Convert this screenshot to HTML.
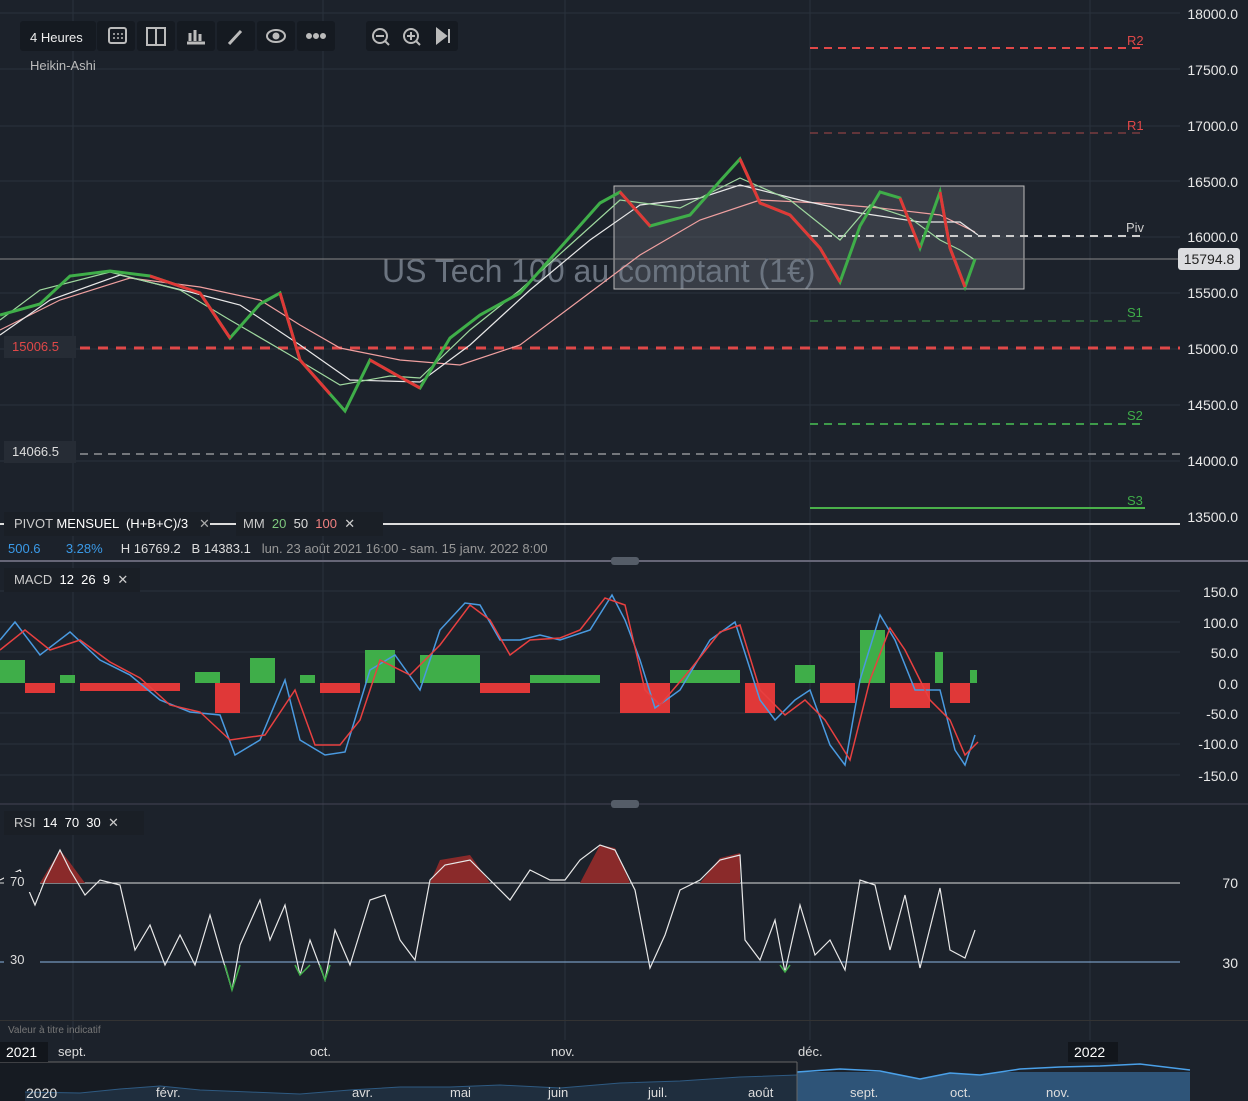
<!DOCTYPE html>
<html><head><meta charset="utf-8"><style>
body{margin:0;width:1248px;height:1101px;background:#1c222b;overflow:hidden;font-family:"Liberation Sans",sans-serif;position:relative;color:#ddd}
.ax{position:absolute;font-size:14px;color:#e8e8e8;right:10px}
.tb{position:absolute;background:#151a21;border-radius:3px;height:30px;top:21px}
.lab{position:absolute;font-size:13px}
</style></head><body>
<svg width="1248" height="1101" style="position:absolute;left:0;top:0">
<g stroke="#2a323d" stroke-width="1">
<line x1="0" y1="13" x2="1180" y2="13"/><line x1="0" y1="69" x2="1180" y2="69"/><line x1="0" y1="126" x2="1180" y2="126"/><line x1="0" y1="181" x2="1180" y2="181"/><line x1="0" y1="237" x2="1180" y2="237"/><line x1="0" y1="293" x2="1180" y2="293"/><line x1="0" y1="349" x2="1180" y2="349"/><line x1="0" y1="405" x2="1180" y2="405"/><line x1="0" y1="461" x2="1180" y2="461"/>
<line x1="0" y1="591" x2="1180" y2="591"/><line x1="0" y1="622" x2="1180" y2="622"/><line x1="0" y1="652" x2="1180" y2="652"/><line x1="0" y1="713" x2="1180" y2="713"/><line x1="0" y1="744" x2="1180" y2="744"/><line x1="0" y1="775" x2="1180" y2="775"/>
<line x1="73" y1="0" x2="73" y2="1040"/><line x1="323" y1="0" x2="323" y2="1040"/><line x1="565" y1="0" x2="565" y2="1040"/><line x1="810" y1="0" x2="810" y2="1040"/><line x1="1090" y1="0" x2="1090" y2="1040"/>
</g>
<rect x="614" y="186" width="410" height="103" fill="#5a6068" fill-opacity="0.45" stroke="#bbb" stroke-width="1"/>
<line x1="0" y1="259" x2="1180" y2="259" stroke="#888" stroke-width="1"/>
<line x1="810" y1="48" x2="1145" y2="48" stroke="#e04848" stroke-width="2" stroke-dasharray="8 6"/>
<line x1="810" y1="133" x2="1145" y2="133" stroke="#a84848" stroke-width="1" stroke-dasharray="8 6"/>
<line x1="810" y1="236" x2="1145" y2="236" stroke="#ccc" stroke-width="2" stroke-dasharray="8 6"/>
<line x1="810" y1="321" x2="1145" y2="321" stroke="#3e9a4a" stroke-width="1" stroke-dasharray="8 6"/>
<line x1="80" y1="348" x2="1180" y2="348" stroke="#e04848" stroke-width="3" stroke-dasharray="10 8"/>
<line x1="810" y1="424" x2="1145" y2="424" stroke="#3e9a4a" stroke-width="2" stroke-dasharray="8 6"/>
<line x1="80" y1="454" x2="1180" y2="454" stroke="#ccc" stroke-width="1" stroke-dasharray="8 6"/>
<line x1="810" y1="508" x2="1145" y2="508" stroke="#4ab04a" stroke-width="2"/>
<text x="382" y="282" font-size="32" fill="#6b7480" font-family="Liberation Sans">US Tech 100 au comptant (1€)</text>
<polyline fill="none" stroke="#f0a0a0" stroke-width="1.2" points="0,330 60,300 130,278 200,287 260,300 300,325 340,348 400,360 460,365 520,345 580,300 640,255 700,220 760,200 820,203 880,208 940,215 975,232"/>
<polyline fill="none" stroke="#e8e8e8" stroke-width="1.2" points="0,335 50,300 120,275 190,292 240,305 300,345 350,380 420,382 470,345 530,290 590,240 640,205 700,198 740,185 800,200 860,213 920,222 960,222 978,235"/>
<polyline fill="none" stroke="#9fd89f" stroke-width="1.2" points="0,320 40,290 110,272 180,290 230,320 290,355 340,385 390,376 420,378 470,330 520,290 570,245 620,200 680,208 740,178 790,200 840,240 870,205 910,218 940,240 960,250 975,260"/>
<polyline fill="none" stroke="#3fae49" stroke-width="3" points="0,315 40,304 70,276 110,271 150,276 200,293 230,338 260,304 280,293 300,360 330,394 345,411 370,360 400,377 420,388 450,338 480,315 520,293 560,248 600,203 620,192 650,226 690,215 720,181 740,159 760,203 790,215 820,248 840,282 860,226 880,192 900,198 920,248 940,192 950,248 965,287 975,259"/>
<polyline fill="none" stroke="#e03838" stroke-width="3" points="150,276 200,293 230,338"/>
<polyline fill="none" stroke="#e03838" stroke-width="3" points="280,293 300,360 330,394"/>
<polyline fill="none" stroke="#e03838" stroke-width="3" points="370,360 400,377 420,388"/>
<polyline fill="none" stroke="#e03838" stroke-width="3" points="620,192 650,226"/>
<polyline fill="none" stroke="#e03838" stroke-width="3" points="740,159 760,203 790,215 820,248 840,282"/>
<polyline fill="none" stroke="#e03838" stroke-width="3" points="900,198 920,248"/>
<polyline fill="none" stroke="#e03838" stroke-width="3" points="940,192 950,248 965,287"/>
<line x1="0" y1="524" x2="1180" y2="524" stroke="#ddd" stroke-width="2"/>
<line x1="0" y1="561" x2="1248" y2="561" stroke="#667" stroke-width="2"/>
<line x1="0" y1="804" x2="1248" y2="804" stroke="#445" stroke-width="1"/>
<rect x="611" y="557" width="28" height="8" rx="3" fill="#555d68"/>
<rect x="611" y="800" width="28" height="8" rx="3" fill="#555d68"/>
<g fill="#3fae49"><rect x="0" y="660" width="25" height="23"/><rect x="60" y="675" width="15" height="8"/><rect x="195" y="672" width="25" height="11"/><rect x="250" y="658" width="25" height="25"/><rect x="300" y="675" width="15" height="8"/><rect x="365" y="650" width="30" height="33"/><rect x="420" y="655" width="60" height="28"/><rect x="530" y="675" width="70" height="8"/><rect x="670" y="670" width="70" height="13"/><rect x="795" y="665" width="20" height="18"/><rect x="860" y="630" width="25" height="53"/><rect x="935" y="652" width="8" height="31"/><rect x="970" y="670" width="7" height="13"/></g>
<g fill="#e03838"><rect x="25" y="683" width="30" height="10"/><rect x="80" y="683" width="100" height="8"/><rect x="215" y="683" width="25" height="30"/><rect x="320" y="683" width="40" height="10"/><rect x="480" y="683" width="50" height="10"/><rect x="620" y="683" width="50" height="30"/><rect x="745" y="683" width="30" height="30"/><rect x="820" y="683" width="35" height="20"/><rect x="890" y="683" width="40" height="25"/><rect x="950" y="683" width="20" height="20"/></g>
<polyline fill="none" stroke="#4a9ae0" stroke-width="1.5" points="0,640 15,622 40,655 70,632 100,660 130,675 160,700 190,712 220,715 235,755 260,740 285,680 300,740 325,755 345,752 370,670 395,655 420,690 440,630 465,603 480,605 500,640 520,640 540,635 560,640 590,630 612,595 625,620 640,660 655,708 680,690 710,640 735,622 760,700 775,720 795,700 810,690 830,745 845,765 860,680 880,615 895,640 915,690 940,690 955,750 965,765 975,735"/>
<polyline fill="none" stroke="#e84040" stroke-width="1.5" points="0,650 25,630 50,650 80,640 110,662 140,678 170,705 200,712 230,740 265,735 295,690 315,745 340,745 360,720 380,660 410,675 440,645 470,605 490,620 510,655 530,640 560,638 580,630 605,598 625,605 645,690 660,705 690,670 720,632 740,625 760,690 785,715 805,700 825,720 850,760 870,680 890,628 905,650 930,700 950,720 965,755 978,742"/>
<line x1="0" y1="883" x2="1180" y2="883" stroke="#ddd" stroke-width="1"/>
<line x1="0" y1="962" x2="1180" y2="962" stroke="#8ab4e0" stroke-width="1"/>
<polygon fill="#8a2a2a" points="40,883 60,850 68,860 85,883"/><polygon fill="#8a2a2a" points="430,883 440,860 470,855 490,883"/><polygon fill="#8a2a2a" points="580,883 600,845 615,848 630,883"/><polygon fill="#8a2a2a" points="700,883 720,858 740,853 740,883"/>
<polyline fill="none" stroke="#e8e8e8" stroke-width="1.2" points="0,880 20,870 35,905 45,880 60,850 70,870 85,895 100,880 120,885 135,950 150,925 165,965 180,935 195,965 210,915 220,950 232,990 240,945 260,900 270,940 285,905 300,975 310,940 325,980 335,930 350,965 370,900 385,895 400,940 415,960 430,880 445,865 470,860 490,880 510,900 530,870 550,880 565,880 580,860 600,845 615,850 635,890 650,968 665,935 680,890 700,880 720,860 740,855 745,940 760,960 775,920 785,972 800,905 815,955 830,940 845,970 860,880 875,885 890,950 905,895 920,968 940,888 950,950 965,958 975,930"/>
<g stroke="#3fae49" stroke-width="1.5" fill="none"><polyline points="225,965 232,990 240,965"/><polyline points="295,965 300,975 310,965"/><polyline points="320,965 325,980 330,965"/><polyline points="780,965 785,972 790,965"/></g>
<rect x="0" y="1062" width="1190" height="39" fill="#161b22"/>
<rect x="797" y="1062" width="393" height="39" fill="#2e5478"/>
<polygon fill="#1f2e3e" points="25,1101 25,1092 80,1093 120,1089 160,1086 200,1090 250,1092 300,1094 350,1090 400,1087 450,1087 500,1085 560,1088 620,1083 680,1081 740,1077 797,1075 797,1101"/>
<polyline fill="none" stroke="#2e5a82" stroke-width="1" points="25,1092 80,1093 120,1089 160,1086 200,1090 250,1092 300,1094 350,1090 400,1087 450,1087 500,1085 560,1088 620,1083 680,1081 740,1077 797,1075"/>
<rect x="797" y="1062" width="393" height="10" fill="#1c222b"/>
<polygon fill="#1c222b" points="797,1072 840,1069 880,1071 920,1079 950,1073 980,1075 1020,1069 1060,1067 1100,1066 1140,1064 1190,1070 1190,1062 797,1062"/>
<polyline fill="none" stroke="#4aa0e8" stroke-width="1.5" points="797,1072 840,1069 880,1071 920,1079 950,1073 980,1075 1020,1069 1060,1067 1100,1066 1140,1064 1190,1070"/>
<line x1="0" y1="1062" x2="797" y2="1062" stroke="#666" stroke-width="1"/>
<line x1="797" y1="1062" x2="797" y2="1101" stroke="#666" stroke-width="1"/>
</svg>
<div class="tb" style="left:20px;width:76px"></div><div class="lab" style="left:30px;top:30px;color:#eee">4 Heures</div>
<div class="tb" style="left:97px;width:38px"></div><div class="tb" style="left:137px;width:38px"></div><div class="tb" style="left:177px;width:38px"></div><div class="tb" style="left:217px;width:38px"></div><div class="tb" style="left:257px;width:38px"></div><div class="tb" style="left:297px;width:38px"></div>
<div class="tb" style="left:366px;width:92px"></div>
<svg width="470" height="60" style="position:absolute;left:0;top:0" fill="none" stroke="#bbb" stroke-width="2">
<rect x="109" y="28" width="17" height="15" rx="2"/><path d="M113 38h2M117 38h2M121 38h2M113 34h2M117 34h2M121 34h2" stroke-width="1.5"/><rect x="147" y="28" width="18" height="17"/><line x1="156" y1="28" x2="156" y2="45"/>
<path d="M187 43h18M190 41v-8M195 41v-11M200 41v-7" stroke-width="3"/><path d="M229 44l12-13" stroke-width="3"/>
<ellipse cx="276" cy="36" rx="9" ry="6"/><circle cx="276" cy="36" r="2.5" fill="#bbb"/>
<circle cx="309" cy="36" r="2" fill="#bbb"/><circle cx="316" cy="36" r="2" fill="#bbb"/><circle cx="323" cy="36" r="2" fill="#bbb"/>
<circle cx="380" cy="36" r="7"/><path d="M376 36h8M385 41l4 4"/><circle cx="411" cy="36" r="7"/><path d="M407 36h8M411 32v8M416 41l4 4"/><path d="M437 29l9 7-9 7z" fill="#bbb"/><line x1="449" y1="29" x2="449" y2="43"/>
</svg>
<div class="lab" style="left:30px;top:58px;color:#bbb">Heikin-Ashi</div>
<div class="ax" style="top:6px">18000.0</div><div class="ax" style="top:62px">17500.0</div><div class="ax" style="top:118px">17000.0</div><div class="ax" style="top:174px">16500.0</div><div class="ax" style="top:229px">16000.0</div><div class="ax" style="top:285px">15500.0</div><div class="ax" style="top:341px">15000.0</div><div class="ax" style="top:397px">14500.0</div><div class="ax" style="top:453px">14000.0</div><div class="ax" style="top:509px">13500.0</div>
<div style="position:absolute;left:1178px;top:248px;width:62px;height:22px;background:#dcdde0;border-radius:3px;color:#222;font-size:14px;line-height:22px;text-align:center">15794.8</div>
<div class="lab" style="left:1127px;top:33px;color:#e04848">R2</div><div class="lab" style="left:1127px;top:118px;color:#e04848">R1</div><div class="lab" style="left:1126px;top:220px;color:#ccc">Piv</div><div class="lab" style="left:1127px;top:305px;color:#3fae49">S1</div><div class="lab" style="left:1127px;top:408px;color:#3fae49">S2</div><div class="lab" style="left:1127px;top:493px;color:#3fae49">S3</div>
<div style="position:absolute;left:4px;top:336px;width:64px;height:22px;background:#262c35;color:#e04848;font-size:13px;line-height:22px;padding-left:8px">15006.5</div>
<div style="position:absolute;left:4px;top:441px;width:64px;height:22px;background:#262c35;color:#ddd;font-size:13px;line-height:22px;padding-left:8px">14066.5</div>
<div style="position:absolute;left:4px;top:512px;width:196px;height:24px;background:#1a1f26;font-size:13px;line-height:24px;padding-left:10px;color:#ccc">PIVOT <span style="color:#fff">MENSUEL &nbsp;(H+B+C)/3</span> &nbsp;&nbsp;<span style="color:#aaa">✕</span></div>
<div style="position:absolute;left:236px;top:512px;width:140px;height:24px;background:#1a1f26;font-size:13px;line-height:24px;padding-left:7px;color:#ccc">MM &nbsp;<span style="color:#7ec87e">20</span> &nbsp;<span style="color:#ddd">50</span> &nbsp;<span style="color:#f08080">100</span> &nbsp;✕</div>
<div class="lab" style="left:8px;top:541px;color:#3a9ae8">500.6 &nbsp;&nbsp;&nbsp;&nbsp;&nbsp;&nbsp;3.28% &nbsp;&nbsp;&nbsp;&nbsp;<span style="color:#ddd">H 16769.2 &nbsp;&nbsp;B 14383.1</span> &nbsp;&nbsp;<span style="color:#999">lun. 23 août 2021 16:00 - sam. 15 janv. 2022 8:00</span></div>
<div style="position:absolute;left:4px;top:568px;width:126px;height:24px;background:#1a1f26;font-size:13px;line-height:24px;padding-left:10px;color:#ccc">MACD &nbsp;<span style="color:#fff">12 &nbsp;26 &nbsp;9</span> &nbsp;✕</div>
<div class="ax" style="top:584px">150.0</div><div class="ax" style="top:615px">100.0</div><div class="ax" style="top:645px">50.0</div><div class="ax" style="top:676px">0.0</div><div class="ax" style="top:706px">-50.0</div><div class="ax" style="top:736px">-100.0</div><div class="ax" style="top:768px">-150.0</div>
<div style="position:absolute;left:4px;top:811px;width:130px;height:24px;background:#1a1f26;font-size:13px;line-height:24px;padding-left:10px;color:#ccc">RSI &nbsp;<span style="color:#fff">14 &nbsp;70 &nbsp;30</span> &nbsp;✕</div>
<div class="ax" style="top:875px">70</div><div class="ax" style="top:955px">30</div>
<div style="position:absolute;left:4px;top:872px;width:30px;height:20px;background:#1c222b;font-size:13px;line-height:20px;padding-left:6px">70</div>
<div style="position:absolute;left:4px;top:950px;width:30px;height:20px;background:#1c222b;font-size:13px;line-height:20px;padding-left:6px">30</div>
<div style="position:absolute;left:0;top:1020px;width:1248px;height:1px;background:#333"></div>
<div style="position:absolute;left:8px;top:1025px;font-size:10px;color:#777">Valeur à titre indicatif</div>
<div style="position:absolute;left:0;top:1042px;width:42px;height:20px;background:#12161c;color:#fff;font-size:14px;line-height:20px;padding-left:6px">2021</div>
<div class="lab" style="left:58px;top:1044px">sept.</div><div class="lab" style="left:310px;top:1044px">oct.</div><div class="lab" style="left:551px;top:1044px">nov.</div><div class="lab" style="left:798px;top:1044px">déc.</div>
<div style="position:absolute;left:1068px;top:1042px;width:44px;height:20px;background:#12161c;color:#fff;font-size:14px;line-height:20px;padding-left:6px">2022</div>
<div class="lab" style="left:26px;top:1085px;font-size:14px">2020</div><div class="lab" style="left:156px;top:1085px">févr.</div><div class="lab" style="left:352px;top:1085px">avr.</div><div class="lab" style="left:450px;top:1085px">mai</div><div class="lab" style="left:548px;top:1085px">juin</div><div class="lab" style="left:648px;top:1085px">juil.</div><div class="lab" style="left:748px;top:1085px">août</div><div class="lab" style="left:850px;top:1085px">sept.</div><div class="lab" style="left:950px;top:1085px">oct.</div><div class="lab" style="left:1046px;top:1085px">nov.</div>
</body></html>
